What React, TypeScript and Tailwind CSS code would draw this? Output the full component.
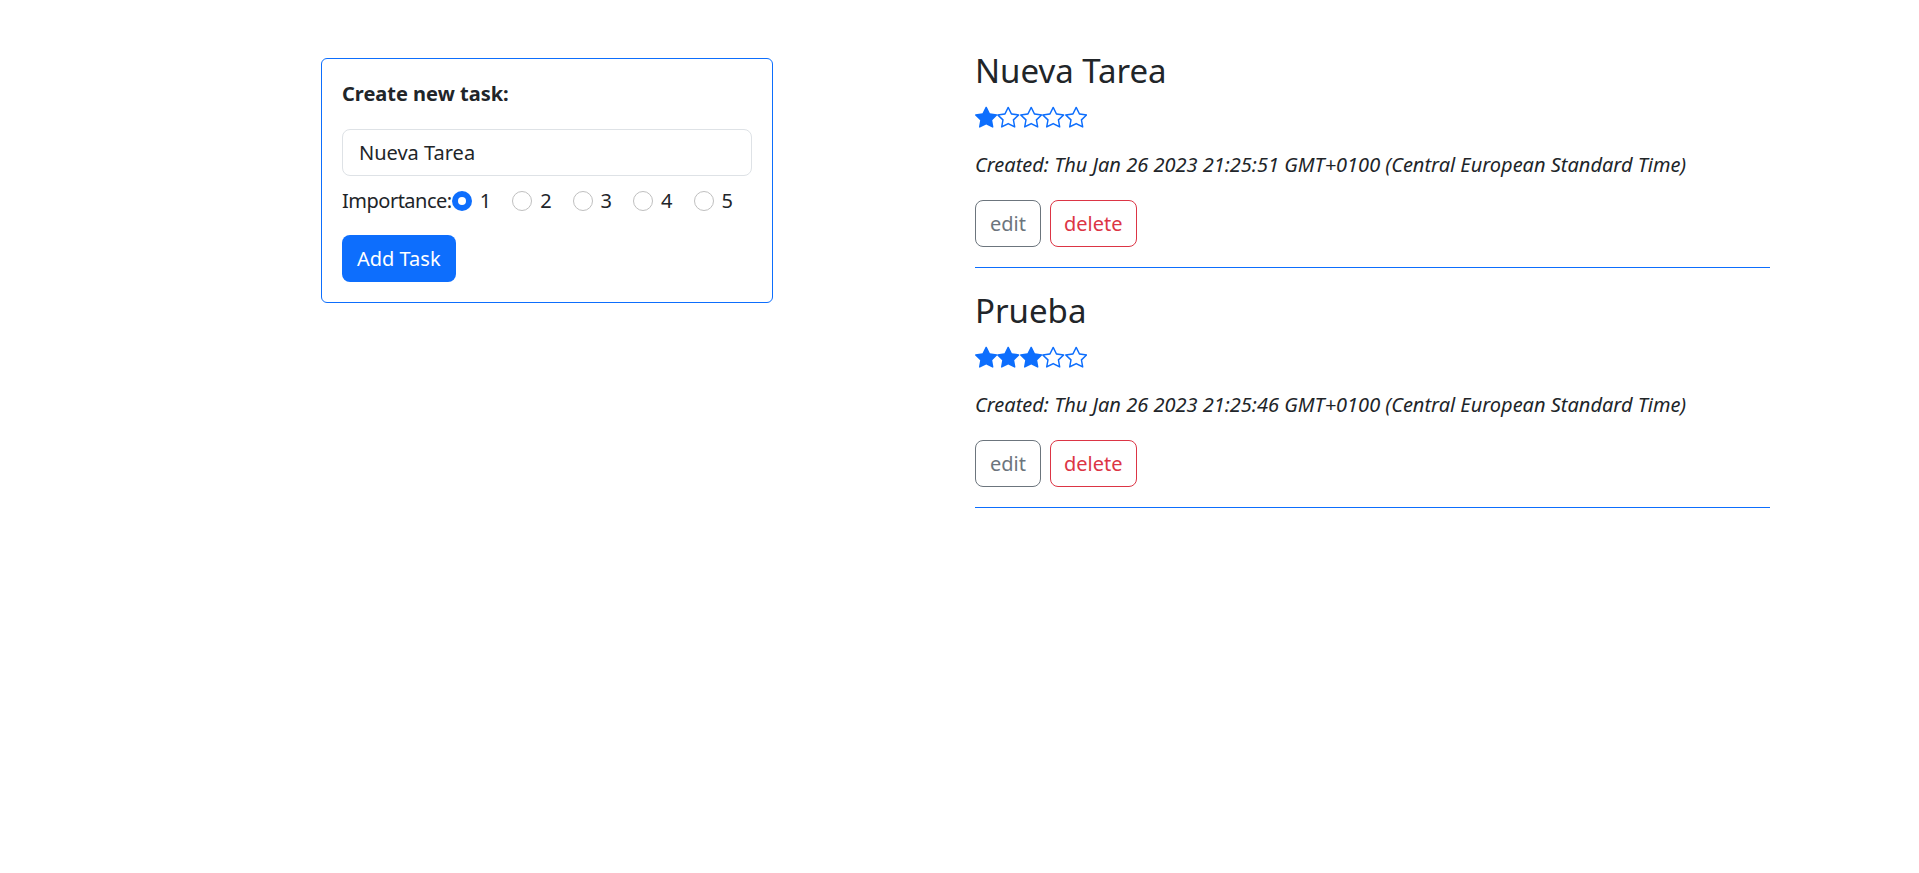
import { useState } from 'react';

const STAR_FILL =
  'M3.612 15.443c-.386.198-.824-.149-.746-.592l.83-4.73L.173 6.765c-.329-.314-.158-.888.283-.95l4.898-.696L7.538.792c.197-.39.73-.39.927 0l2.184 4.327 4.898.696c.441.062.612.636.282.95l-3.522 3.356.83 4.73c.078.443-.36.79-.746.592L8 13.187l-4.389 2.256z';
const STAR_EMPTY =
  'M2.866 14.85c-.078.444.36.791.746.593l4.39-2.256 4.389 2.256c.386.198.824-.149.746-.592l-.83-4.73 3.522-3.356c.33-.314.16-.888-.282-.95l-4.898-.696L8.465.792a.513.513 0 0 0-.927 0L5.354 5.12l-4.898.696c-.441.062-.612.636-.283.95l3.523 3.356-.83 4.73zm4.905-2.767-3.686 1.894.694-3.957a.56.56 0 0 0-.163-.505L1.71 6.745l4.052-.576a.53.53 0 0 0 .393-.288L8 2.223l1.847 3.658a.53.53 0 0 0 .393.288l4.052.575-2.906 2.77a.56.56 0 0 0-.163.506l.694 3.957-3.686-1.894a.5.5 0 0 0-.461 0z';

const tasks = [
  { title: 'Nueva Tarea', stars: 1, created: 'Thu Jan 26 2023 21:25:51 GMT+0100 (Central European Standard Time)' },
  { title: 'Prueba', stars: 3, created: 'Thu Jan 26 2023 21:25:46 GMT+0100 (Central European Standard Time)' },
];

function Stars({ count }: { count: number }) {
  return (
    <div className="flex h-[22px]">
      {[1, 2, 3, 4, 5].map((i) => (
        <svg key={i} width="22.4" height="22.4" viewBox="0 0 16 16" fill="#0d6efd">
          <path d={i <= count ? STAR_FILL : STAR_EMPTY} />
        </svg>
      ))}
    </div>
  );
}

function Radio({ checked }: { checked: boolean }) {
  return checked ? (
    <span className="flex h-5 w-5 shrink-0 items-center justify-center rounded-full bg-[#0d6efd]">
      <span className="h-2 w-2 rounded-full bg-white" />
    </span>
  ) : (
    <span className="h-5 w-5 shrink-0 rounded-full border border-[#bfbfbf] bg-white" />
  );
}

function TaskForm() {
  const [importance, setImportance] = useState(1);
  return (
    <div className="w-[452px] shrink-0 rounded-[6px] border border-[#0d6efd] p-5">
      <p className="mb-[20px] text-[20px] leading-[30px] font-bold">Create new task:</p>
      <div className="flex h-[47px] items-center rounded-[8px] border border-[#dee2e6] px-4 text-[20px]">
        Nueva Tarea
      </div>
      <div className="mt-[10px] flex h-[30px] items-center text-[20px]">
        <span className="tracking-[-0.5px]">Importance:</span>
        {[1, 2, 3, 4, 5].map((n) => (
          <label key={n} className="flex cursor-pointer items-center" onClick={() => setImportance(n)}>
            <Radio checked={importance === n} />
            <span className="mr-[21px] ml-2">{n}</span>
          </label>
        ))}
      </div>
      <button className="mt-[19px] h-[47px] rounded-[8px] bg-[#0d6efd] px-[15px] text-[20px] text-white">Add Task</button>
    </div>
  );
}

function TaskItem({ title, stars, created }: { title: string; stars: number; created: string }) {
  return (
    <div className="border-b border-[#0d6efd] pb-[20px]">
      <h2 className="text-[33px] leading-[38px]">{title}</h2>
      <div className="mt-4">
        <Stars count={stars} />
      </div>
      <p className="mt-[22px] text-[20px] leading-[30px] italic">Created: {created}</p>
      <div className="mt-[20px] flex gap-[9px]">
        <button className="h-[47px] rounded-[8px] border border-[#6c757d] px-[14px] text-[20px] text-[#6c757d]">edit</button>
        <button className="h-[47px] rounded-[8px] border border-[#dc3545] px-[13px] text-[20px] text-[#dc3545]">delete</button>
      </div>
    </div>
  );
}

export default function App() {
  return (
    <div className="min-h-screen bg-white font-['Noto_Sans',sans-serif] text-[#212529]">
      <div className="flex items-start pt-[58px] pl-[321px]">
        <TaskForm />
        <div className="ml-[202px] flex w-[795px] -translate-y-[6px] flex-col gap-[24px]">
          {tasks.map((t) => (
            <TaskItem key={t.title} {...t} />
          ))}
        </div>
      </div>
    </div>
  );
}
